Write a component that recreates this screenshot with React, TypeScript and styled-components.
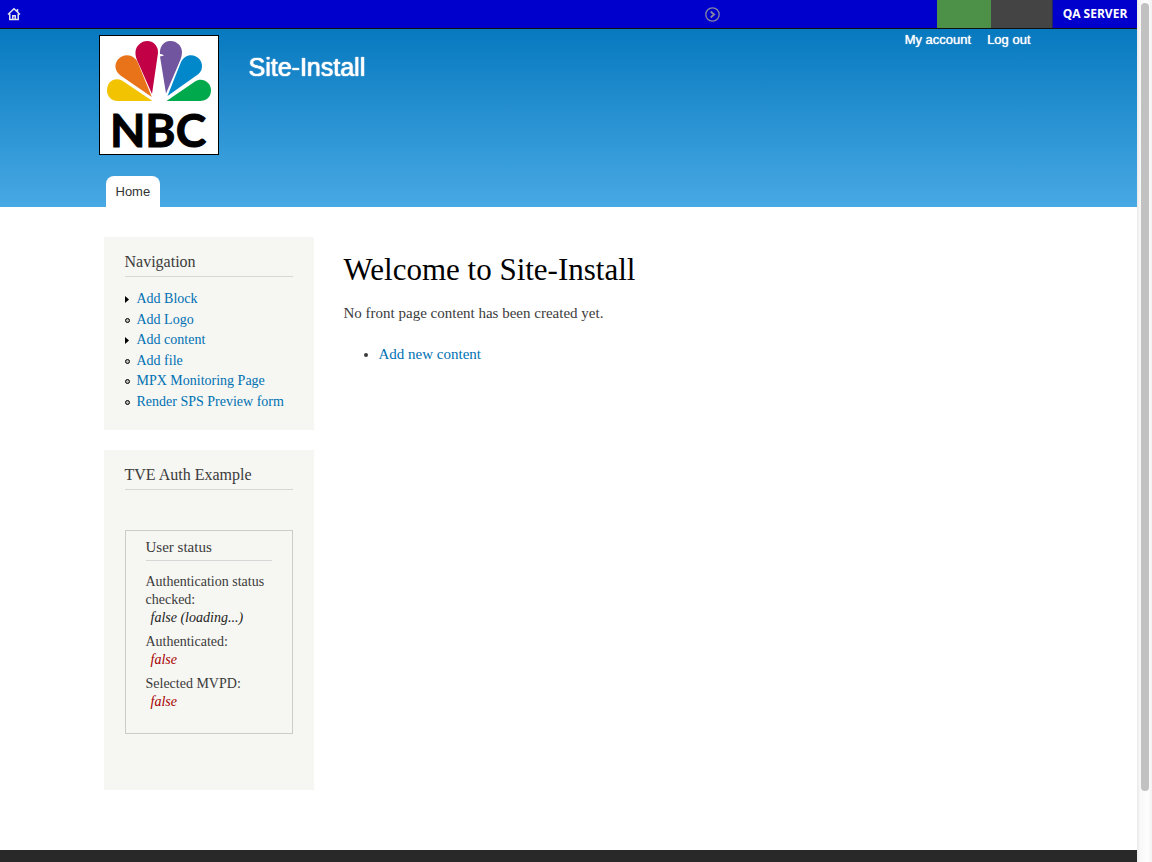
import React from "react";
import styled, { createGlobalStyle } from "styled-components";

const serif = `"Liberation Serif", Georgia, serif`;
const sans = `"Liberation Sans", Helvetica, Arial, sans-serif`;

const GlobalStyle = createGlobalStyle`
  *, *::before, *::after { box-sizing: border-box; }
  body { margin: 0; background: #fff; color: #3b3b3b; font-family: ${serif}; }
  a { color: #0071b3; text-decoration: none; }
  h1, h2, h3, p, ul, dl, dd { margin: 0; padding: 0; }
  ul { list-style: none; }
`;

const Shell = styled.div`
  display: flex;
  min-height: 100vh;
`;

const Page = styled.div`
  flex: 1;
  min-width: 0;
  display: flex;
  flex-direction: column;
`;

const ScrollTrack = styled.div`
  width: 15px;
  padding: 3px 3px 71px 4px;
  display: flex;
  background: linear-gradient(to right, #e9e9e9, #f8f8f8 3px, #fdfdfd 11px, #f2f2f2);
`;

const ScrollThumb = styled.div`
  flex: 1;
  border-radius: 4px;
  background: #c1c1c1;
`;

const Toolbar = styled.nav`
  display: flex;
  height: 29px;
  background: #0000cd;
  border-bottom: 1px solid #111;
`;

const HomeLink = styled.a`
  display: flex;
  align-items: center;
  padding: 0 7px;
  margin-right: auto;
`;

const ToggleButton = styled.button`
  display: flex;
  align-items: center;
  padding: 0;
  border: 0;
  background: none;
  margin-right: 217px;
`;

const Swatch = styled.div<{ $width: number; $color: string }>`
  width: ${(p) => p.$width}px;
  background: ${(p) => p.$color};
`;

const ServerLabel = styled.div`
  width: 85px;
  border-left: 1px solid #222266;
  color: #fff;
  text-align: center;
  font: bold 12px/27px "Open Sans", ${sans};
`;

const Header = styled.header`
  background: linear-gradient(#0779bf, #48a9e4);
`;

const Container = styled.div`
  max-width: 960px;
  margin: 0 auto;
`;

const Branding = styled.div`
  display: flex;
  align-items: flex-start;
  height: 147px;
  padding: 6px 18px 0 10px;
`;

const LogoLink = styled.a`
  display: block;
  width: 120px;
  height: 120px;
  border: 1px solid #000;
  background: #fff;
`;

const LogoDrawing = styled.svg`
  display: block;
  overflow: visible;
`;

const SiteName = styled.div`
  margin: 17px auto 0 30px;
  font: 25px/30px ${sans};
  a { color: #fff; text-shadow: 0 0 1px #fff, 0 0 1px #fff; }
`;

const AccountMenu = styled.ul`
  display: flex;
  gap: 16px;
  font: 13px/10px ${sans};
  a { color: #fff; text-shadow: 0 0 1px #fff; }
`;

const Tabs = styled.ul`
  display: flex;
  padding-left: 17px;
`;

const Tab = styled.a`
  display: block;
  padding: 0 10px;
  border-radius: 8px 8px 0 0;
  background: #fff;
  color: #333;
  font: 13px/31px ${sans};
`;

const Columns = styled(Container)`
  width: 100%;
  display: flex;
  padding: 30px 15px 60px;
  gap: 30px;
`;

const Sidebar = styled.aside`
  width: 210px;
  display: flex;
  flex-direction: column;
  gap: 20px;
`;

const Block = styled.section<{ $bottom: number }>`
  padding: 15px 21px ${(p) => p.$bottom}px;
  background: #f6f6f2;
`;

const BlockTitle = styled.h2`
  padding-bottom: 5px;
  border-bottom: 1px solid #d6d6d6;
  font: 16px/19px ${serif};
`;

const NavList = styled.ul`
  padding-top: 12px;
  font-size: 14px;
  line-height: 20px;
`;

const NavItem = styled.li`
  display: flex;
  align-items: center;
  gap: 7px;
  &:nth-child(odd) { padding-bottom: 1px; }
`;

const StatusBox = styled.div`
  margin-top: 40px;
  padding: 6px 20px 16px;
  border: 1px solid #ccc;
`;

const StatusTitle = styled.h3`
  padding-bottom: 3px;
  margin-bottom: 12px;
  border-bottom: 1px solid #d6d6d6;
  font: 15px/20px ${serif};
`;

const StatusList = styled.dl`
  font-size: 14px;
  line-height: 18px;
`;

const StatusValue = styled.dd<{ $alert?: boolean }>`
  padding-left: 5px;
  margin-bottom: 6px;
  font-style: italic;
  color: ${(p) => (p.$alert ? "#a60000" : "#222")};
`;

const Main = styled.main`
  flex: 1;
  padding-top: 14px;
`;

const PageTitle = styled.h1`
  color: #000;
  font: 31px/37px ${serif};
`;

const Intro = styled.p`
  margin-top: 14px;
  font-size: 15px;
  line-height: 22px;
`;

const ActionList = styled.ul`
  margin-top: 19px;
  padding-left: 35px;
  list-style: disc;
  font-size: 15px;
  line-height: 22px;
`;

const Footer = styled.footer`
  flex: 1;
  min-height: 12px;
  background: #292929;
`;

const HomeIcon = () => (
  <svg width="14" height="14" viewBox="0 0 14 14" fill="none" stroke="#e4e4ee" strokeWidth="1.5" aria-hidden="true">
    <path d="M1 7.5 7 1.8l6 5.7M2.8 6.8v5.7h8.4V6.8M5.8 12.5V8.8h2.4v3.7M10.5 2v3" />
  </svg>
);

const ToggleIcon = () => (
  <svg width="16" height="16" viewBox="0 0 16 16" fill="none" stroke="#8686a4" aria-hidden="true">
    <circle cx="8.5" cy="8.5" r="6.7" strokeWidth="1.3" />
    <path d="m6.700 5.500 3.400 3-3.400 3" strokeWidth="1.8" />
  </svg>
);

const Peacock = () => (
  <LogoDrawing width="118" height="118" viewBox="100 36 118 118" role="img" aria-label="NBC">
    <path fill="#f2c300" d="M152.500 101H118C111 101 107 96 107 90.500C107 82 114 77 122 80.500Z" />
    <path fill="#e97318" d="M151.800 97 120.500 75.500C115 71 114 65 117.500 60C122 54 131 53.500 136 59.500Q137.500 61 138 63Z" />
    <path fill="#c20045" d="M152 94 137 60C134.500 54 135 48 139 44.500C144 39.500 152 40 156 45.500Q158.500 49 158 53Z" />
    <path fill="#71559f" d="M166 93.500 160 56.500 164 55.500Q162 53.500 160 54C159.500 47 163 42.500 168 41.300C175 39.500 182 45 182 52Q182 56 180.500 59.500Z" />
    <path fill="#0088cb" d="M167.500 96 181 62C184 56 190 53.500 196 56.500C203 60 204 69 198.500 74Z" />
    <path fill="#00a94b" d="M166.500 101 195 81.500C202 77 211 82 211 90.500C211 97 206 101 200 101Z" />
    <text x="158" y="147" textAnchor="middle" fill="#000" stroke="#000" strokeWidth="1" fontFamily="Lato, sans-serif" fontWeight="700" fontSize="46">
      NBC
    </text>
  </LogoDrawing>
);

const ArrowMarker = () => (
  <svg width="5" height="7" viewBox="0 0 5 7" aria-hidden="true">
    <path d="M0 0v7l4-3.500z" fill="#000" />
  </svg>
);

const DotMarker = () => (
  <svg width="5" height="5" viewBox="0 0 5 5" aria-hidden="true">
    <circle cx="2.500" cy="2.500" r="2" fill="#bbb" stroke="#000" strokeWidth="1" />
  </svg>
);

const navigation = [
  { label: "Add Block", expandable: true },
  { label: "Add Logo", expandable: false },
  { label: "Add content", expandable: true },
  { label: "Add file", expandable: false },
  { label: "MPX Monitoring Page", expandable: false },
  { label: "Render SPS Preview form", expandable: false },
];

export default function App() {
  return (
    <>
      <GlobalStyle />
      <Shell>
        <Page>
          <Toolbar aria-label="Administration">
            <HomeLink href="#" aria-label="Home"><HomeIcon /></HomeLink>
            <ToggleButton type="button" aria-label="Show menu"><ToggleIcon /></ToggleButton>
            <Swatch $width={54} $color="#4d9148" />
            <Swatch $width={61} $color="#444" />
            <ServerLabel>QA SERVER</ServerLabel>
          </Toolbar>
          <Header>
            <Container>
              <Branding>
                <LogoLink href="#"><Peacock /></LogoLink>
                <SiteName><a href="#">Site-Install</a></SiteName>
                <AccountMenu>
                  <li><a href="#">My account</a></li>
                  <li><a href="#">Log out</a></li>
                </AccountMenu>
              </Branding>
              <Tabs><li><Tab href="#">Home</Tab></li></Tabs>
            </Container>
          </Header>
          <Columns>
            <Sidebar>
              <Block $bottom={18}>
                <BlockTitle>Navigation</BlockTitle>
                <NavList>
                  {navigation.map((item) => (
                    <NavItem key={item.label}>
                      {item.expandable ? <ArrowMarker /> : <DotMarker />}
                      <a href="#">{item.label}</a>
                    </NavItem>
                  ))}
                </NavList>
              </Block>
              <Block $bottom={56}>
                <BlockTitle>TVE Auth Example</BlockTitle>
                <StatusBox>
                  <StatusTitle>User status</StatusTitle>
                  <StatusList>
                    <dt>Authentication status checked:</dt>
                    <StatusValue>false (loading...)</StatusValue>
                    <dt>Authenticated:</dt>
                    <StatusValue $alert>false</StatusValue>
                    <dt>Selected MVPD:</dt>
                    <StatusValue $alert>false</StatusValue>
                  </StatusList>
                </StatusBox>
              </Block>
            </Sidebar>
            <Main>
              <PageTitle>Welcome to Site-Install</PageTitle>
              <Intro>No front page content has been created yet.</Intro>
              <ActionList>
                <li><a href="#">Add new content</a></li>
              </ActionList>
            </Main>
          </Columns>
          <Footer />
        </Page>
        <ScrollTrack aria-hidden="true"><ScrollThumb /></ScrollTrack>
      </Shell>
    </>
  );
}
